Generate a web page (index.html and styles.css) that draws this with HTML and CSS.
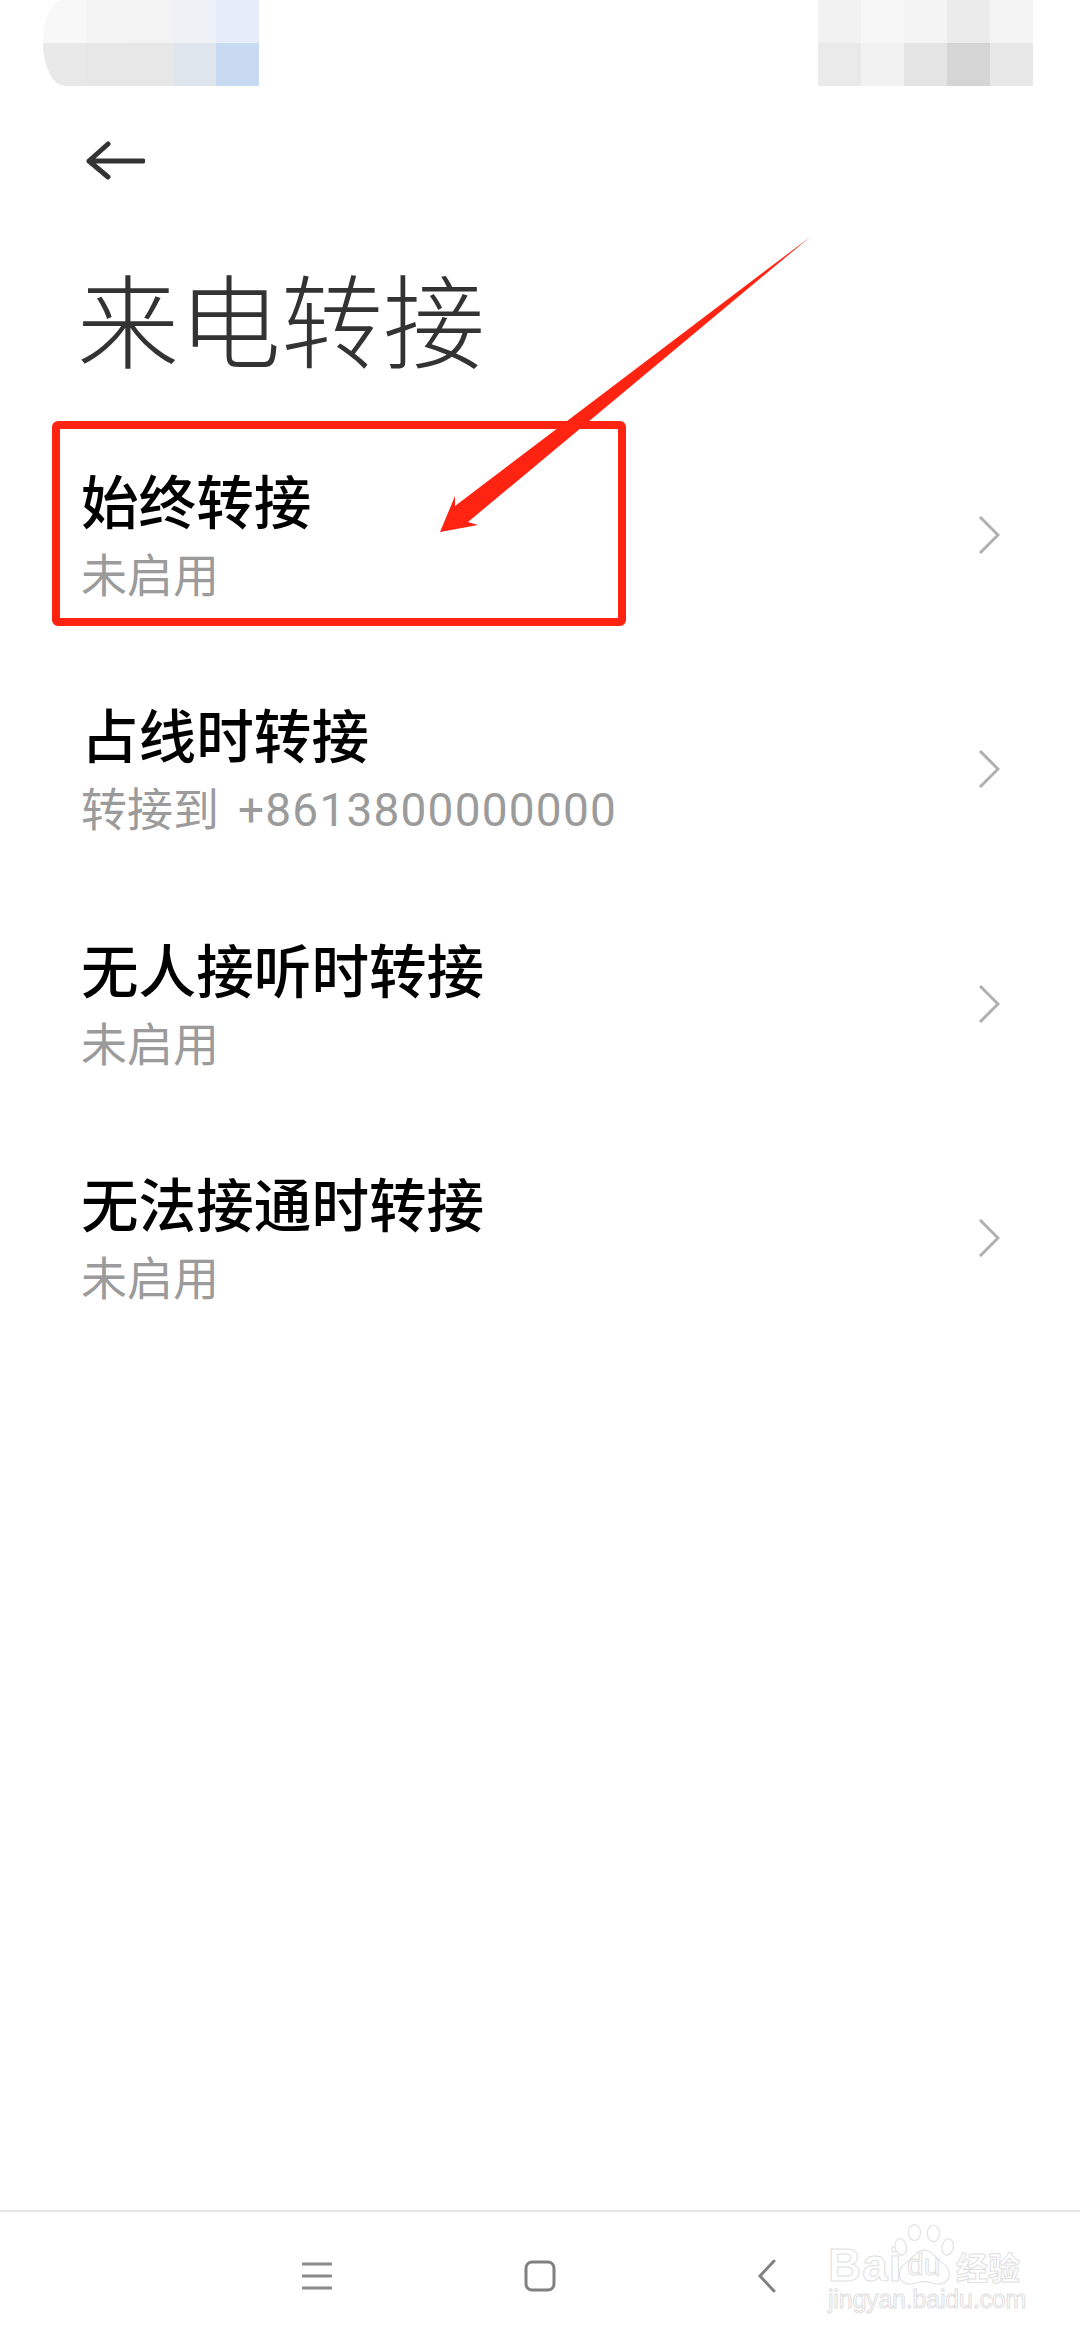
FILE: index.html
```html
<!DOCTYPE html>
<html lang="zh-CN">
<head>
<meta charset="utf-8">
<title>来电转接</title>
<link rel="stylesheet" href="styles.css">
</head>
<body>
<div class="page">
  <div class="status">
    <div class="mosaic mosaic-left">
      <i class="c1a"></i><i class="c1b"></i><i class="c1c"></i><i class="c1d"></i><i class="c1e"></i>
      <i class="c2a"></i><i class="c2b"></i><i class="c2c"></i><i class="c2d"></i><i class="c2e"></i>
    </div>
    <div class="mosaic mosaic-right">
      <i class="r1a"></i><i class="r1b"></i><i class="r1c"></i><i class="r1d"></i><i class="r1e"></i>
      <i class="r2a"></i><i class="r2b"></i><i class="r2c"></i><i class="r2d"></i><i class="r2e"></i>
    </div>
  </div>
  <main class="main">
    <div class="backbar">
      <svg class="back" width="60" height="40" viewBox="0 0 60 40"><path d="M58 20H4M23 3 4 20l19 16" fill="none" stroke="#333" stroke-width="5" stroke-linecap="round" stroke-linejoin="round"/></svg>
    </div>
    <h1 class="title">来电转接</h1>
    <ul class="list">
      <li class="row">
        <div><div class="row-title">始终转接</div><div class="row-sub">未启用</div></div>
        <svg class="chev" width="22" height="38" viewBox="0 0 22 38"><path d="M2 1 20 19 2 37" fill="none" stroke="#b0b0b0" stroke-width="3"/></svg>
      </li>
      <li class="row">
        <div><div class="row-title">占线时转接</div><div class="row-sub">转接到<span class="num">+8613800000000</span></div></div>
        <svg class="chev" width="22" height="38" viewBox="0 0 22 38"><path d="M2 1 20 19 2 37" fill="none" stroke="#b0b0b0" stroke-width="3"/></svg>
      </li>
      <li class="row">
        <div><div class="row-title">无人接听时转接</div><div class="row-sub">未启用</div></div>
        <svg class="chev" width="22" height="38" viewBox="0 0 22 38"><path d="M2 1 20 19 2 37" fill="none" stroke="#b0b0b0" stroke-width="3"/></svg>
      </li>
      <li class="row">
        <div><div class="row-title">无法接通时转接</div><div class="row-sub">未启用</div></div>
        <svg class="chev" width="22" height="38" viewBox="0 0 22 38"><path d="M2 1 20 19 2 37" fill="none" stroke="#b0b0b0" stroke-width="3"/></svg>
      </li>
    </ul>
  </main>
  <nav class="nav">
    <svg class="nav-menu" width="30" height="28" viewBox="0 0 30 28"><path d="M1 2H29M1 14H29M1 26H29" fill="none" stroke="#8a8a8a" stroke-width="3" stroke-linecap="round"/></svg>
    <svg class="nav-home" width="32" height="32" viewBox="0 0 32 32"><rect x="2" y="2" width="28" height="28" rx="6" fill="none" stroke="#808080" stroke-width="3"/></svg>
    <svg class="nav-back" width="18" height="34" viewBox="0 0 18 34"><path d="M16 2 2 17l14 15" fill="none" stroke="#808080" stroke-width="3" stroke-linecap="round"/></svg>
  </nav>

  <div class="redbox"></div>
  <svg class="arrow" width="1080" height="600" viewBox="0 0 1080 600"><polygon points="810,237 468,522 478,525 440,532 455,496 455,506" fill="#ff2312"/></svg>

  <div class="watermark">
    <div class="wm-top">
      <span class="wm-bai">Bai</span>
      <span class="wm-paw">
        <svg width="82" height="84" viewBox="0 0 82 84"><g fill="#fff" stroke="#e2e2e2" stroke-width="1.6"><ellipse cx="9" cy="30" rx="7.5" ry="11" transform="rotate(-12 9 30)"/><ellipse cx="27" cy="11" rx="8" ry="10.5"/><ellipse cx="52" cy="12" rx="8" ry="11"/><ellipse cx="71" cy="30" rx="7.5" ry="11" transform="rotate(12 71 30)"/><path d="M40 34c9 0 13 8 20 14 7 5 13 9 13 18 0 9-8 14-16 13-6-1-11-3-17-3s-11 2-17 3c-8 1-16-4-16-13 0-9 6-13 13-18 7-6 11-14 20-14Z"/></g></svg>
        <span class="wm-du">du</span>
      </span>
      <span class="wm-cn">经验</span>
    </div>
    <div class="wm-url">jingyan.baidu.com</div>
  </div>
</div>
</body>
</html>
```
FILE: styles.css
```css
* { box-sizing: border-box; }
html, body { margin: 0; padding: 0; background: #fff; }
.page {
  position: relative;
  width: 1080px;
  height: 2340px;
  display: flex;
  flex-direction: column;
  overflow: hidden;
  font-family: Roboto, "Noto Sans CJK SC", sans-serif;
}
.status {
  height: 86px;
  flex: none;
  display: flex;
  justify-content: space-between;
  padding: 0 47px 0 43px;
}
.mosaic {
  width: 216px;
  height: 86px;
  display: grid;
  grid-template-columns: repeat(5, 1fr);
  grid-template-rows: repeat(2, 1fr);
  overflow: hidden;
}
.mosaic-left { border-radius: 20px 0 0 22px / 43px 0 0 43px; }
.mosaic-right { width: 215px; }
.c1a { background: #f8f8f8; } .c1b { background: #f4f4f4; } .c1c { background: #f3f3f3; } .c1d { background: #eef1f5; } .c1e { background: #e6edf8; }
.c2a { background: #e9e9e9; } .c2b { background: #e7e7e7; } .c2c { background: #e8e7e7; } .c2d { background: #dfe5ed; } .c2e { background: #c8daf1; }
.r1a { background: #f2f2f2; } .r1b { background: #f7f7f7; } .r1c { background: #f3f3f3; } .r1d { background: #ebebeb; } .r1e { background: #f4f4f4; }
.r2a { background: #eaeaea; } .r2b { background: #f2f2f2; } .r2c { background: #e4e4e4; } .r2d { background: #d5d5d5; } .r2e { background: #e8e8e8; }

.main { flex: 1; display: flex; flex-direction: column; }
.backbar { padding: 55px 0 0 85px; height: 166px; flex: none; }
.back { display: block; }
.title {
  margin: 0;
  padding-left: 77px;
  font-family: "Noto Sans CJK SC", sans-serif;
  font-size: 102px;
  line-height: 130px;
  font-weight: 300;
  color: #333;
  height: 166px;
}
.list { list-style: none; margin: 0; padding: 0; }
.row {
  height: 234.3px;
  display: flex;
  align-items: center;
  justify-content: space-between;
  padding: 0 80px 0 81px;
}
.row-title {
  font-family: "Noto Sans CJK SC", sans-serif;
  font-size: 57.6px;
  line-height: 72px;
  font-weight: 500;
  color: #000;
}
.row-sub {
  font-size: 46px;
  line-height: 62px;
  margin-top: 10px;
  color: #9b9b9b;
  font-family: Roboto, "Noto Sans CJK SC", sans-serif;
}
.num { letter-spacing: 1.2px; margin-left: 19px; }
.chev { display: block; }

.nav {
  height: 130px;
  flex: none;
  border-top: 2px solid #e6e6e6;
  display: flex;
  align-items: center;
  padding-left: 302px;
}
.nav-home { margin-left: 192px; }
.nav-back { margin-left: 202px; }

.redbox {
  position: absolute;
  left: 52px;
  top: 421px;
  width: 574px;
  height: 205px;
  border: 8px solid #ff2312;
  border-radius: 6px;
}
.arrow { position: absolute; left: 0; top: 0; }

.watermark {
  position: absolute;
  left: 828px;
  top: 2224px;
  width: 200px;
  color: transparent;
  -webkit-text-stroke: 1px #e0e0e0;
  font-family: "Liberation Sans", sans-serif;
}
.wm-top { display: flex; align-items: flex-end; height: 64px; }
.wm-bai { font-size: 46px; line-height: 46px; font-weight: 700; letter-spacing: 1px; width: 66px; flex: none; }
.wm-paw { position: relative; width: 62px; height: 64px; flex: none; }
.wm-paw svg { display: block; width: 62px; height: 64px; }
.wm-du { position: absolute; left: 13px; bottom: 8px; font-size: 30px; line-height: 30px; }
.wm-cn { font-family: "Noto Sans CJK SC", sans-serif; font-size: 32px; line-height: 44px; font-weight: 700; width: 66px; flex: none; }
.wm-url { font-size: 25px; line-height: 28px; letter-spacing: -0.2px; margin-top: -3px; }
```
